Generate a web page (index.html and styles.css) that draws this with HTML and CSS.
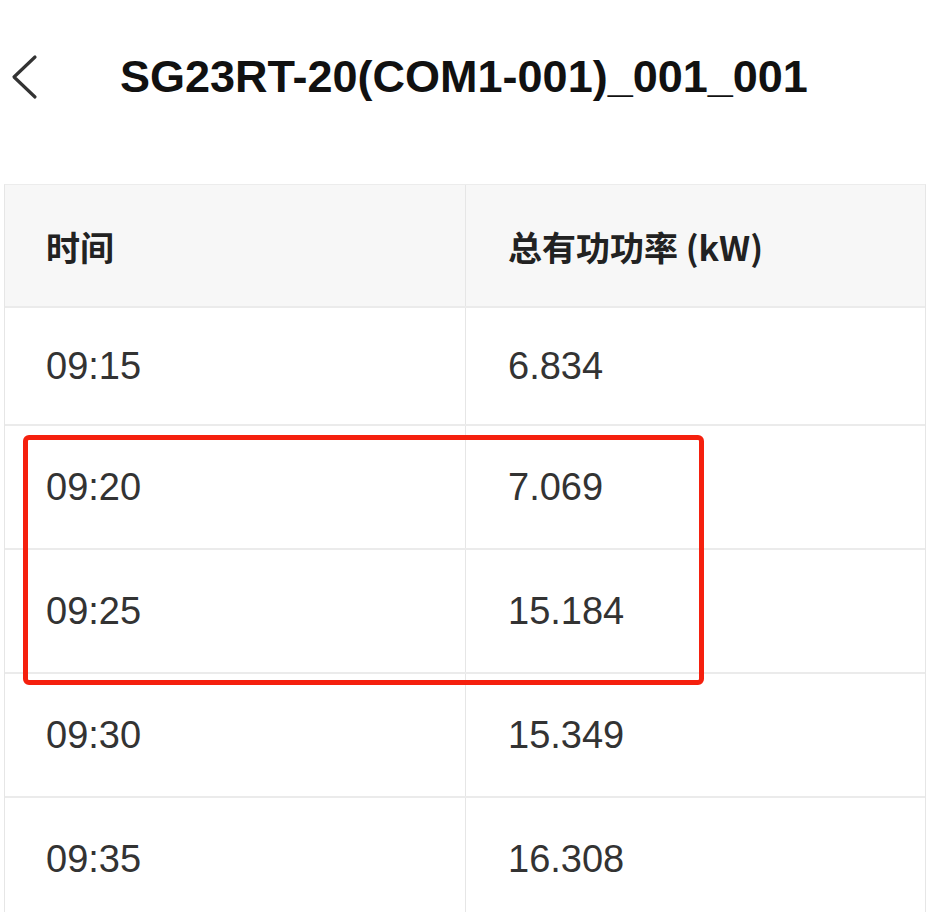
FILE: index.html
```html
<!DOCTYPE html>
<html lang="zh">
<head>
<meta charset="utf-8">
<link rel="stylesheet" href="styles.css">
</head>
<body>
<header class="nav">
  <span class="back" aria-label="返回">
    <svg width="28" height="46" viewBox="0 0 28 46"><path d="M25 3 L4 23 L25 43" fill="none" stroke="#333" stroke-width="3.2" stroke-linecap="round" stroke-linejoin="round"/></svg>
  </span>
  <h1 class="title">SG23RT-20(COM1-001)_001_001</h1>
</header>
<div class="table-wrap">
  <div class="table">
    <div class="row head"><div class="cell">时间</div><div class="cell">总有功功率 (kW)</div></div>
    <div class="row first"><div class="cell">09:15</div><div class="cell">6.834</div></div>
    <div class="row"><div class="cell">09:20</div><div class="cell">7.069</div></div>
    <div class="row"><div class="cell">09:25</div><div class="cell">15.184</div></div>
    <div class="row"><div class="cell">09:30</div><div class="cell">15.349</div></div>
    <div class="row"><div class="cell">09:35</div><div class="cell">16.308</div></div>
  </div>
  <div class="highlight"></div>
</div>
</body>
</html>
```

FILE: styles.css
```css
html, body {
  margin: 0;
  padding: 0;
  background: #ffffff;
  height: 912px;
  overflow: hidden;
}
body {
  font-family: "Liberation Sans", "Noto Sans CJK SC", sans-serif;
  color: #333;
}
.nav {
  height: 154px;
  display: flex;
  align-items: center;
  padding-bottom: 0;
  box-sizing: border-box;
}
.back {
  display: flex;
  width: 28px;
  margin-left: 10px;
  margin-top: 0;
}
.title {
  margin: 0 0 0 82px;
  font-size: 45px;
  font-weight: 700;
  color: #111;
  letter-spacing: 0;
}
.table-wrap {
  position: relative;
  margin-top: 30px;
  margin-left: 4px;
  width: 922px;
}
.table {
  border-left: 1px solid #e6e6e6;
  border-right: 1px solid #e6e6e6;
  border-top: 1px solid #ececec;
}
.row {
  display: grid;
  grid-template-columns: 460px 1fr;
  height: 124px;
  box-sizing: border-box;
  border-bottom: 2px solid #ebebeb;
}
.row.head {
  height: 123px;
  background: #f7f7f7;
}
.row.first {
  height: 118px;
}
.cell {
  display: flex;
  align-items: center;
  padding-left: 41px;
  font-size: 38px;
  color: #333;
}
.cell + .cell {
  border-left: 1px solid #e6e6e6;
  padding-left: 42px;
}
.head .cell {
  font-family: "Noto Sans CJK SC", "Liberation Sans", sans-serif;
  font-size: 34px;
  font-weight: 700;
  color: #222;
  padding-top: 2px;
}
.highlight {
  position: absolute;
  left: 19px;
  top: 251px;
  width: 681px;
  height: 250px;
  box-sizing: border-box;
  border: 5px solid #f5200e;
  border-radius: 6px;
}
```
